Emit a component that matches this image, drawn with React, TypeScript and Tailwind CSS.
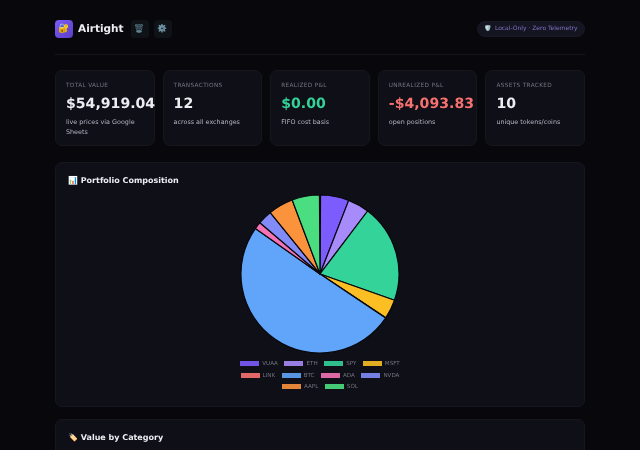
const FONT = "font-['DejaVu_Sans','Noto_Color_Emoji',sans-serif]";

const stats = [
  { label: "TOTAL VALUE", value: "$54,919.04", sub: "live prices via Google Sheets", color: "text-[#ececf1]" },
  { label: "TRANSACTIONS", value: "12", sub: "across all exchanges", color: "text-[#ececf1]" },
  { label: "REALIZED P&L", value: "$0.00", sub: "FIFO cost basis", color: "text-[#34d399]" },
  { label: "UNREALIZED P&L", value: "-$4,093.83", sub: "open positions", color: "text-[#f87171]" },
  { label: "ASSETS TRACKED", value: "10", sub: "unique tokens/coins", color: "text-[#ececf1]" },
];

const slices = [
  { name: "VUAA", color: "#7c5cfc", from: 0.4, to: 21.3 },
  { name: "ETH", color: "#a78bfa", from: 21.3, to: 37.1 },
  { name: "SPY", color: "#34d399", from: 37.1, to: 109.4 },
  { name: "MSFT", color: "#fbbf24", from: 109.4, to: 123.7 },
  { name: "LINK", color: "#f87171", from: 123.7, to: 123.9 },
  { name: "BTC", color: "#60a5fa", from: 123.9, to: 305.1 },
  { name: "ADA", color: "#f472b6", from: 305.1, to: 310.5 },
  { name: "NVDA", color: "#818cf8", from: 310.5, to: 321 },
  { name: "AAPL", color: "#fb923c", from: 321, to: 339.4 },
  { name: "SOL", color: "#4ade80", from: 339.4, to: 359.6 },
];

function wedge(from: number, to: number) {
  const c = 80;
  const r = 79;
  const p = (a: number) => {
    const t = (a * Math.PI) / 180;
    return `${(c + r * Math.sin(t)).toFixed(2)} ${(c - r * Math.cos(t)).toFixed(2)}`;
  };
  return `M${c} ${c}L${p(from)}A${r} ${r} 0 ${to - from > 180 ? 1 : 0} 1 ${p(to)}Z`;
}

function Legend({ names }: { names: string[] }) {
  return (
    <div className="flex justify-center gap-[6.5px] h-[11.5px] items-center">
      {names.map((n) => {
        const s = slices.find((x) => x.name === n)!;
        return (
          <div key={n} className="flex items-center gap-[3px]">
            <span className="w-[19px] h-[5px] opacity-90" style={{ backgroundColor: s.color }} />
            <span className="mt-[3px] text-[5.6px] leading-none text-[#74747f] [will-change:opacity]">{n}</span>
          </div>
        );
      })}
    </div>
  );
}

export default function App() {
  return (
    <div className={`${FONT} [text-rendering:geometricPrecision] w-[640px] h-[450px] overflow-hidden bg-[#08080c] px-[55px] pt-[20px]`}>
      <header className="flex items-center justify-between h-[18px]">
        <div className="flex items-center">
          <div className="w-[18px] h-[18px] rounded-[4px] bg-gradient-to-br from-[#7c5cfc] to-[#5b3fc4] flex items-center justify-center text-[9px] leading-none">🔐</div>
          <span className="ml-[5px] text-[10.5px] font-bold text-[#ececf1] leading-none [will-change:opacity]">Airtight</span>
          <div className="ml-[7px] w-[18px] h-[18px] rounded-[4px] bg-[#0f1318] flex items-center justify-center text-[8px] leading-none">
            <span className="opacity-70">🗑️</span>
          </div>
          <div className="ml-[5px] w-[18px] h-[18px] rounded-[4px] bg-[#0f1318] flex items-center justify-center text-[8px] leading-none">
            <span className="opacity-80">⚙️</span>
          </div>
        </div>
        <div className="w-[108px] h-[16px] rounded-full bg-[#151522] border border-[#191926] flex items-center justify-center gap-[3px] text-[6px] leading-none text-[#7f72c4]">
          <span className="text-[6px]">🛡️</span>
          <span className="[will-change:opacity]">Local-Only · Zero Telemetry</span>
        </div>
      </header>
      <div className="mt-[16px] h-px bg-[#15151c]" />

      <div className="mt-[15px] grid grid-cols-5 gap-[8px]">
        {stats.map((s) => (
          <div key={s.label} className="h-[76px] rounded-[7px] border border-[#16161f] bg-[#0e0f17] pl-[10px] pr-[4px] pt-[11px]">
            <div className="text-[5.76px] leading-[9px] tracking-[0.35px] text-[#74747f] whitespace-nowrap [will-change:opacity]">{s.label}</div>
            <div className={`mt-[2px] text-[14.1px] leading-[22px] font-bold whitespace-nowrap [will-change:opacity] ${s.color}`}>{s.value}</div>
            <div className="mt-[2px] text-[6.4px] leading-[10px] text-[#b4b4c0] [will-change:opacity]">{s.sub}</div>
          </div>
        ))}
      </div>

      <section className="mt-[16px] h-[245px] rounded-[7px] border border-[#16161f] bg-[#0e0f17] pl-[12px] pt-[12px]">
        <h2 className="text-[8px] leading-[12px] font-bold text-[#ececf1] [will-change:opacity]">📊 Portfolio Composition</h2>
        <div className="-ml-[12px] mt-[7px] flex justify-center">
          <svg width="160" height="160" viewBox="0 0 160 160">
            {slices.map((s) => (
              <path key={s.name} d={wedge(s.from, s.to)} fill={s.color} stroke="#08080c" strokeWidth="1.2" strokeLinejoin="round" />
            ))}
          </svg>
        </div>
        <div className="-ml-[12px] mt-[4px]">
          <Legend names={["VUAA", "ETH", "SPY", "MSFT"]} />
          <Legend names={["LINK", "BTC", "ADA", "NVDA"]} />
          <Legend names={["AAPL", "SOL"]} />
        </div>
      </section>

      <section className="mt-[12px] h-[60px] rounded-[7px] border border-[#16161f] bg-[#0e0f17] pl-[12px] pt-[12px]">
        <h2 className="text-[8px] leading-[12px] font-bold text-[#ececf1] [will-change:opacity]">🏷️ Value by Category</h2>
      </section>
    </div>
  );
}
